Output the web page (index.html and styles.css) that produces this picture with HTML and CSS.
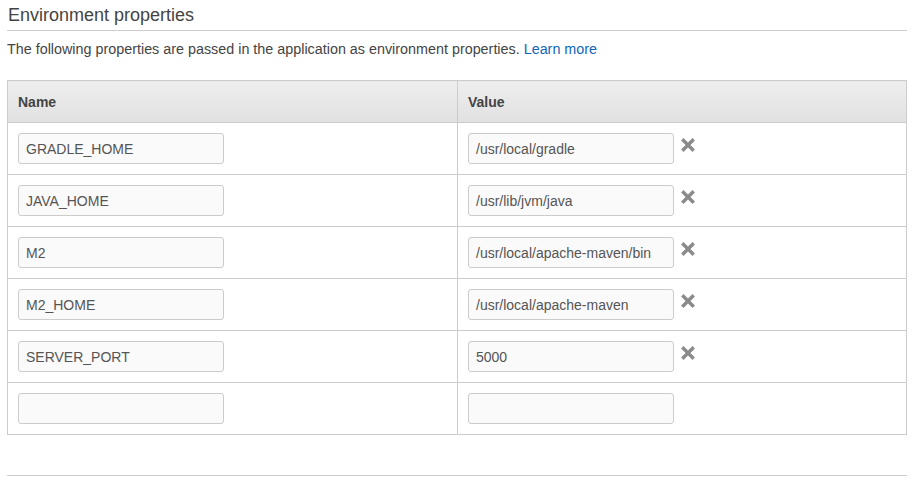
FILE: index.html
```html
<!DOCTYPE html>
<html>
<head>
<meta charset="utf-8">
<link rel="stylesheet" href="styles.css">
</head>
<body>
<section class="panel">
  <h2 class="title">Environment properties</h2>
  <p class="desc">The following properties are passed in the application as environment properties. <a href="#" class="link">Learn more</a></p>
  <table class="props">
    <thead>
      <tr><th class="col-name">Name</th><th>Value</th></tr>
    </thead>
    <tbody>
      <tr>
        <td class="col-name"><input class="field" value="GRADLE_HOME"></td>
        <td><div class="vcell"><input class="field" value="/usr/local/gradle"><span class="remove"><svg viewBox="0 0 14 14" width="14" height="14"><path d="M2.5 2.5L11.5 11.5M11.5 2.5L2.5 11.5" stroke="#8a8a8a" stroke-width="3.4" stroke-linecap="square"/></svg></span></div></td>
      </tr>
      <tr>
        <td class="col-name"><input class="field" value="JAVA_HOME"></td>
        <td><div class="vcell"><input class="field" value="/usr/lib/jvm/java"><span class="remove"><svg viewBox="0 0 14 14" width="14" height="14"><path d="M2.5 2.5L11.5 11.5M11.5 2.5L2.5 11.5" stroke="#8a8a8a" stroke-width="3.4" stroke-linecap="square"/></svg></span></div></td>
      </tr>
      <tr>
        <td class="col-name"><input class="field" value="M2"></td>
        <td><div class="vcell"><input class="field" value="/usr/local/apache-maven/bin"><span class="remove"><svg viewBox="0 0 14 14" width="14" height="14"><path d="M2.5 2.5L11.5 11.5M11.5 2.5L2.5 11.5" stroke="#8a8a8a" stroke-width="3.4" stroke-linecap="square"/></svg></span></div></td>
      </tr>
      <tr>
        <td class="col-name"><input class="field" value="M2_HOME"></td>
        <td><div class="vcell"><input class="field" value="/usr/local/apache-maven"><span class="remove"><svg viewBox="0 0 14 14" width="14" height="14"><path d="M2.5 2.5L11.5 11.5M11.5 2.5L2.5 11.5" stroke="#8a8a8a" stroke-width="3.4" stroke-linecap="square"/></svg></span></div></td>
      </tr>
      <tr>
        <td class="col-name"><input class="field" value="SERVER_PORT"></td>
        <td><div class="vcell"><input class="field" value="5000"><span class="remove"><svg viewBox="0 0 14 14" width="14" height="14"><path d="M2.5 2.5L11.5 11.5M11.5 2.5L2.5 11.5" stroke="#8a8a8a" stroke-width="3.4" stroke-linecap="square"/></svg></span></div></td>
      </tr>
      <tr>
        <td class="col-name"><input class="field" value=""></td>
        <td><div class="vcell"><input class="field" value=""></div></td>
      </tr>
    </tbody>
  </table>
  <hr class="bottom-rule">
</section>
</body>
</html>
```

FILE: styles.css
```css
* { box-sizing: border-box; }
html, body { margin: 0; padding: 0; background: #fff; }
body {
  font-family: "Liberation Sans", Arial, sans-serif;
  color: #444;
  padding: 0 16px 0 7px;
}
.panel { width: 900px; }
.title {
  margin: 0;
  padding: 5px 0 4px 1px;
  font-size: 18px;
  font-weight: normal;
  color: #444;
  line-height: 21px;
  border-bottom: 1px solid #ccc;
}
.desc {
  margin: 9px 0 0 0;
  font-size: 14.35px;
  line-height: 18px;
  color: #444;
}
.link { color: #1166bb; text-decoration: none; }
.props {
  margin-top: 22px;
  width: 900px;
  border-collapse: collapse;
  border: 1px solid #ccc;
  table-layout: fixed;
}
.props th {
  height: 42px;
  text-align: left;
  font-size: 14px;
  font-weight: bold;
  color: #444;
  padding: 0 10px;
  background: linear-gradient(#eeeeee, #e1e1e1);
  border: 1px solid #ccc;
  vertical-align: middle;
}
.props td {
  height: 52px;
  padding: 0 10px;
  border: 1px solid #ccc;
  vertical-align: middle;
}
.col-name { width: 450px; }
.vcell { display: flex; align-items: center; }
.field {
  display: block;
  width: 206px;
  height: 31px;
  margin: 0;
  padding: 0 7px;
  border: 1px solid #ccc;
  border-radius: 3px;
  background: #fafafa;
  font-family: "Liberation Sans", Arial, sans-serif;
  font-size: 14px;
  color: #555;
  outline: none;
}
.remove {
  display: flex;
  margin-left: 7px;
  margin-top: -7px;
}
.bottom-rule {
  margin: 40px 0 0 0;
  border: 0;
  border-top: 1px solid #ccc;
  height: 0;
}
```
